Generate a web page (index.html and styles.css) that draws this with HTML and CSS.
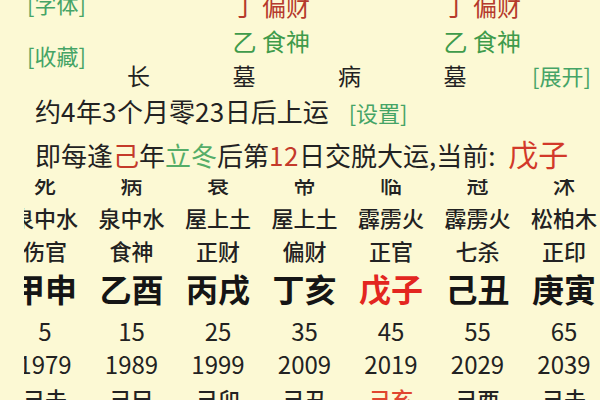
FILE: index.html
```html
<!DOCTYPE html>
<html lang="zh">
<head>
<meta charset="utf-8">
<link rel="stylesheet" href="styles.css">
</head>
<body>
<div class="page">
  <section class="top">
    <div class="links">
      <span class="link">[字体]</span>
      <span class="link">[收藏]</span>
    </div>
    <div class="pillars">
      <span></span><span class="red">丁 偏财</span><span></span><span class="red">丁 偏财</span><span></span>
      <span></span><span class="green">乙 食神</span><span></span><span class="green">乙 食神</span><span></span>
      <span class="stage">长</span><span class="stage">墓</span><span class="stage">病</span><span class="stage">墓</span><span class="link more">[展开]</span>
    </div>
  </section>

  <p class="line l1">约<span class="num">4</span>年<span class="num">3</span>个月零<span class="num">23</span>日后上运 <span class="link set">[设置]</span></p>
  <p class="line l2">即每逢<span class="red1">己</span>年<span class="green2">立冬</span>后第<span class="red1 num">12</span>日交脱大运,当前: <span class="cur">戊子</span></p>

  <div class="scroller">
    <div class="dayun">
      <div class="row r-stage"><span>死</span><span>病</span><span>衰</span><span>帝</span><span>临</span><span>冠</span><span>沐</span></div>
      <div class="row r-cjk"><span>泉中水</span><span>泉中水</span><span>屋上土</span><span>屋上土</span><span>霹雳火</span><span>霹雳火</span><span>松柏木</span></div>
      <div class="row r-cjk"><span>伤官</span><span>食神</span><span>正财</span><span>偏财</span><span>正官</span><span>七杀</span><span>正印</span></div>
      <div class="row r-gz"><span>甲申</span><span>乙酉</span><span>丙戌</span><span>丁亥</span><span class="now">戊子</span><span>己丑</span><span>庚寅</span></div>
      <div class="row r-age"><span>5</span><span>15</span><span>25</span><span>35</span><span>45</span><span>55</span><span>65</span></div>
      <div class="row r-year"><span>1979</span><span>1989</span><span>1999</span><span>2009</span><span>2019</span><span>2029</span><span>2039</span></div>
      <div class="row r-ln"><span>己未</span><span>己巳</span><span>己卯</span><span>己丑</span><span class="now2">己亥</span><span>己酉</span><span>己未</span></div>
    </div>
  </div>
</div>
</body>
</html>
```

FILE: styles.css
```css
html, body {
  margin: 0;
  padding: 0;
  width: 600px;
  height: 400px;
  overflow: hidden;
  background: #fcf9d4;
}

body {
  font-family: "Noto Sans CJK SC", "Noto Sans", sans-serif;
  font-weight: 400;
  color: #222;
}

.page {
  width: 600px;
}

.top {
  display: flex;
  margin-top: -14px;
  height: 107px;
}

.links {
  width: 100px;
  padding-left: 27px;
  display: flex;
  flex-direction: column;
  gap: 18px;
}

.link {
  color: #45a466;
  font-size: 22px;
  font-weight: 400;
  line-height: 34px;
  white-space: nowrap;
}

.pillars {
  display: grid;
  grid-template-columns: 105.5px 105.5px 105.5px 88.5px 68px;
  grid-auto-rows: 35px;
  padding-top: 1.5px;
  font-size: 24px;
  line-height: 35px;
  white-space: nowrap;
}

.red { color: #b53a2c; }
.green { color: #3f9b4b; }

.stage {
  color: #222;
  font-size: 23px;
}

.more {
  line-height: 35px;
}

.line {
  margin: 0;
  padding-left: 35px;
  font-size: 26px;
  height: 36px;
  line-height: 36px;
  white-space: nowrap;
  color: #222;
}

.num {
  letter-spacing: 0.5px;
}

.l1 { margin-top: 0; }
.l2 { margin-top: 6px; }

.set {
  font-size: 22px;
  margin-left: 14px;
}

.red1 { color: #c43a2a; }
.green2 { color: #55ad68; }

.cur {
  color: #d2392a;
  font-size: 30px;
  margin-left: 7px;
}

.scroller {
  margin-top: 8px;
  margin-left: 24px;
  width: 576px;
  height: 221px;
  overflow: hidden;
}

.dayun {
  margin-top: -11.75px;
  margin-left: -22.25px;
  width: 606px;
  font-weight: 500;
}

.row {
  display: grid;
  grid-template-columns: repeat(7, 86.5px);
  text-align: center;
  white-space: nowrap;
}

.r-stage, .r-cjk {
  font-size: 22px;
  height: 33.5px;
  line-height: 33.5px;
}

.r-gz {
  font-size: 32px;
  font-weight: 700;
  height: 40.5px;
  line-height: 40.5px;
  color: #151515;
}

.r-age {
  font-size: 24px;
  font-weight: 400;
  height: 45px;
  line-height: 45px;
}

.r-year {
  font-size: 24px;
  font-weight: 400;
  height: 22px;
  line-height: 22px;
}

.r-ln {
  font-size: 22px;
  height: 46px;
  line-height: 46px;
}

.now { color: #e3261f; }
.now2 { color: #e0452f; }
```
